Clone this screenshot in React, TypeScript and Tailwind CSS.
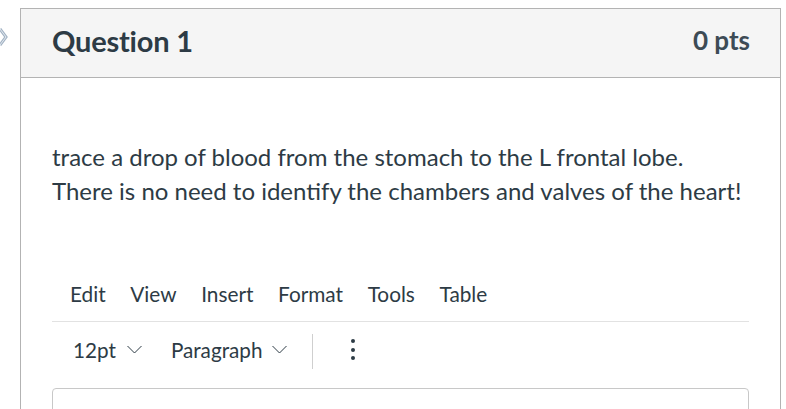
import React from "react";

const Chevron = () => (
  <svg width="15" height="9" viewBox="0 0 15 9" className="block text-[#2d3b45]" fill="none">
    <path d="M0.5 1 L7.5 8 L14.5 1" stroke="currentColor" strokeWidth="1" />
  </svg>
);

export default function App() {
  return (
    <div
      className="relative h-[409px] w-[786px] overflow-hidden bg-white text-[#2d3b45]"
      style={{ fontFamily: "Lato, 'Open Sans', sans-serif" }}
    >
      <svg className="absolute left-0 top-[28px]" width="9" height="18" viewBox="0 0 9 18" fill="none">
        <path d="M0 1 L6 9 L0 17" stroke="#a3b3c4" strokeWidth="3" />
        <path d="M0 1 L6 9 L0 17" stroke="#e3e9ef" strokeWidth="1" />
      </svg>
      <div className="ml-[20px] mt-[8px] w-[761px] border border-[#b3b3b3]">
        <div className="flex h-[69px] items-center justify-between border-b border-[#b3b3b3] bg-[#f5f5f5] pb-[6px] pl-[31px] pr-[30px]">
          <div className="text-[29px] font-bold leading-none tracking-[-0.2px]">Question 1</div>
          <div className="text-[26px] font-bold leading-none text-[#3d4b55]">0 pts</div>
        </div>
        <div className="px-[31px] pt-[62px]">
          <p className="text-[24px] leading-[34px]">
            trace a drop of blood from the stomach to the L frontal lobe.
            <br />
            There is no need to identify the chambers and valves of the heart!
          </p>
          <div className="mt-[67px] flex h-[47px] items-center gap-[24.6px] border-b border-[#e2e2e2] pb-[9px] pl-[18px] text-[20.8px] leading-[24px]">
            <span>Edit</span>
            <span>View</span>
            <span>Insert</span>
            <span>Format</span>
            <span>Tools</span>
            <span>Table</span>
          </div>
          <div className="flex h-[59px] items-center pb-[4px] pl-[21px] text-[20.7px] leading-[24px]">
            <span>12pt</span>
            <span className="ml-[11px]"><Chevron /></span>
            <span className="ml-[29px]">Paragraph</span>
            <span className="ml-[10px]"><Chevron /></span>
            <div className="ml-[25px] mt-[4px] h-[35px] w-px bg-[#cfcfcf]" />
            <div className="ml-[38px] flex flex-col gap-[4.5px]">
              <span className="block h-[4px] w-[4px] rounded-full bg-[#2d3b45]" />
              <span className="block h-[4px] w-[4px] rounded-full bg-[#2d3b45]" />
              <span className="block h-[4px] w-[4px] rounded-full bg-[#2d3b45]" />
            </div>
          </div>
          <div className="mt-[7px] h-[60px] rounded-[4px] border border-[#c8c8c8]" />
        </div>
      </div>
    </div>
  );
}
